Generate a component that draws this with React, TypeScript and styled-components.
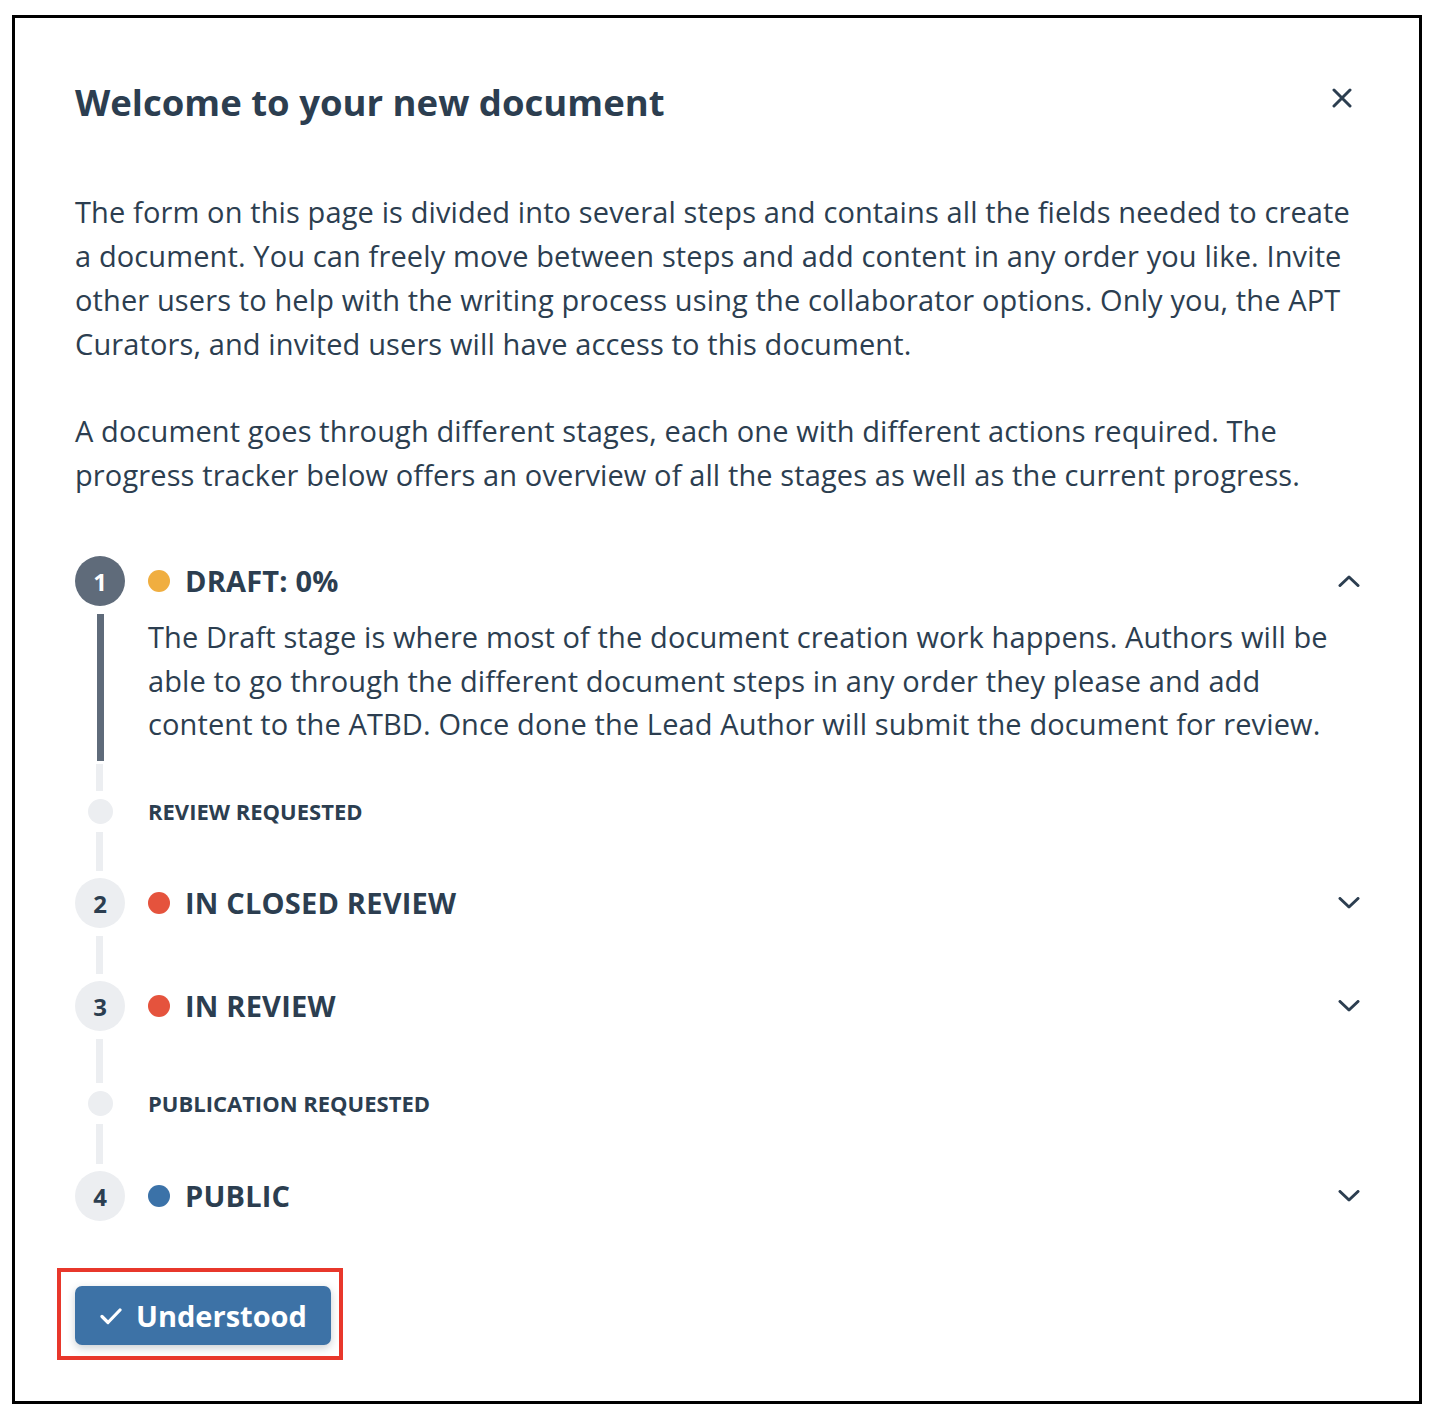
import React from "react";
import styled, { createGlobalStyle } from "styled-components";

const GlobalStyle = createGlobalStyle`
  * { box-sizing: border-box; }
  html, body { margin: 0; padding: 0; background: #ffffff; }
  body { font-family: "Open Sans", "Noto Sans", sans-serif; color: #2c3e50; }
`;

const Frame = styled.div`
  margin: 15px 0 0 12px;
  width: 1410px;
  height: 1389px;
  border: 3px solid #000;
  background: #fff;
  padding: 63px 59px 0 60px;
  display: flex;
  flex-direction: column;
`;

const Header = styled.header`
  display: flex;
  align-items: center;
  justify-content: space-between;
  height: 42px;
`;

const Title = styled.h1`
  margin: 0;
  font-size: 36.5px;
  line-height: 42px;
  font-weight: 700;
  color: #2c3e50;
`;

const CloseButton = styled.button`
  align-self: flex-start;
  border: 0;
  background: none;
  padding: 0;
  margin: 7px 8px 0 0;
  width: 20px;
  height: 20px;
  display: flex;
  color: #2c3e50;
`;

const Intro = styled.p<{ $top: number }>`
  margin: ${(p) => p.$top}px 0 0;
  font-size: 29px;
  letter-spacing: 0.12px;
  line-height: 44px;
  font-weight: 400;
  color: #2c3e50;
`;

const Timeline = styled.div`
  margin-top: 59px;
  display: flex;
  flex-direction: column;
`;

const StageHead = styled.div`
  display: grid;
  grid-template-columns: 50px 1fr 22px;
  column-gap: 23px;
  align-items: center;
`;

const Marker = styled.div<{ $active?: boolean }>`
  width: 50px;
  height: 50px;
  border-radius: 50%;
  background: ${(p) => (p.$active ? "#5f6b7a" : "#eceef1")};
  color: ${(p) => (p.$active ? "#ffffff" : "#2c3e50")};
  display: flex;
  align-items: center;
  justify-content: center;
  font-size: 24px;
  font-weight: 700;
`;

const StageTitle = styled.h2`
  margin: 0;
  display: flex;
  align-items: center;
  gap: 15px;
  font-size: 29px;
  letter-spacing: 0.2px;
  line-height: 36px;
  font-weight: 700;
  color: #2c3e50;
`;

const StatusDot = styled.span<{ $color: string }>`
  width: 22px;
  height: 22px;
  border-radius: 50%;
  background: ${(p) => p.$color};
  flex: none;
`;

const Chevron = styled.svg`
  width: 22px;
  height: 12px;
  color: #2c3e50;
`;

const StageBody = styled.div`
  display: grid;
  grid-template-columns: 50px 1fr;
  column-gap: 23px;
  height: 155px;
`;

const Track = styled.div`
  justify-self: center;
  width: 7px;
  margin-top: 8px;
  background: #5f6b7a;
`;

const Description = styled.p`
  margin: 9px 0 0;
  font-size: 29px;
  letter-spacing: 0.12px;
  line-height: 43.5px;
  color: #2c3e50;
`;

const Connector = styled.div<{ $h: number; $top?: number }>`
  width: 7px;
  height: ${(p) => p.$h}px;
  margin: ${(p) => p.$top ?? 8}px 0 7px 21px;
  background: #eceef1;
`;

const SubStep = styled.div`
  display: grid;
  grid-template-columns: 50px 1fr;
  column-gap: 23px;
  align-items: center;
`;

const SubDot = styled.div`
  justify-self: center;
  width: 25px;
  height: 25px;
  border-radius: 50%;
  background: #eceef1;
`;

const SubLabel = styled.span`
  font-size: 22px;
  line-height: 26px;
  font-weight: 700;
  color: #2c3e50;
`;

const Footer = styled.div`
  margin-top: 65px;
  display: flex;
`;

const Highlight = styled.div`
  position: relative;
  &::after {
    content: "";
    position: absolute;
    inset: -18px -12px -15px -18px;
    border: 4px solid #e8372b;
    pointer-events: none;
  }
`;

const PrimaryButton = styled.button`
  display: flex;
  align-items: center;
  gap: 14px;
  height: 59px;
  width: 256px;
  padding: 0 0 0 25px;
  border: 0;
  border-radius: 7px;
  background: #3d72a6;
  color: #ffffff;
  font-family: "Open Sans", "Noto Sans", sans-serif;
  font-size: 29px;
  font-weight: 700;
  box-shadow: 0 3px 8px rgba(44, 62, 80, 0.25);
`;

const ChevronIcon = ({ up }: { up?: boolean }) => (
  <Chevron viewBox="0 0 22 12" fill="none">
    <path
      d={up ? "M2 10.5 L11 2 L20 10.5" : "M2 1.5 L11 10 L20 1.5"}
      stroke="currentColor"
      strokeWidth="3"
      strokeLinecap="round"
      strokeLinejoin="round"
    />
  </Chevron>
);

type Stage = { n: number; label: string; color: string };

const StageHeader = ({ n, label, color, active, up }: Stage & { active?: boolean; up?: boolean }) => (
  <StageHead>
    <Marker $active={active}>{n}</Marker>
    <StageTitle>
      <StatusDot $color={color} />
      {label}
    </StageTitle>
    <ChevronIcon up={up} />
  </StageHead>
);

export default function App() {
  return (
    <>
      <GlobalStyle />
      <Frame>
        <Header>
          <Title>Welcome to your new document</Title>
          <CloseButton aria-label="Close">
            <svg width="20" height="20" viewBox="0 0 20 20" fill="none">
              <path d="M2 2 L18 18 M18 2 L2 18" stroke="currentColor" strokeWidth="3" strokeLinecap="round" />
            </svg>
          </CloseButton>
        </Header>
        <Intro $top={67}>
          The form on this page is divided into several steps and contains all the fields needed to create a
          document. You can freely move between steps and add content in any order you like. Invite other users
          to help with the writing process using the collaborator options. Only you, the APT Curators, and invited
          users will have access to this document.
        </Intro>
        <Intro $top={43}>
          A document goes through different stages, each one with different actions required. The progress tracker
          below offers an overview of all the stages as well as the current progress.
        </Intro>
        <Timeline>
          <StageHeader n={1} label="DRAFT: 0%" color="#f0ae40" active up />
          <StageBody>
            <Track />
            <Description>
              The Draft stage is where most of the document creation work happens. Authors will be able to go
              through the different document steps in any order they please and add content to the ATBD. Once done
              the Lead Author will submit the document for review.
            </Description>
          </StageBody>
          <Connector $top={3} $h={27} />
          <SubStep>
            <SubDot />
            <SubLabel>REVIEW REQUESTED</SubLabel>
          </SubStep>
          <Connector $h={39} />
          <StageHeader n={2} label="IN CLOSED REVIEW" color="#e5533d" />
          <Connector $h={38} />
          <StageHeader n={3} label="IN REVIEW" color="#e5533d" />
          <Connector $h={44} />
          <SubStep>
            <SubDot />
            <SubLabel>PUBLICATION REQUESTED</SubLabel>
          </SubStep>
          <Connector $h={40} />
          <StageHeader n={4} label="PUBLIC" color="#3b72a8" />
        </Timeline>
        <Footer>
          <Highlight>
            <PrimaryButton>
              <svg width="22" height="18" viewBox="0 0 22 18" fill="none">
                <path d="M2 9.5 L8 15.5 L20 3" stroke="currentColor" strokeWidth="3.2" strokeLinecap="round" strokeLinejoin="round" />
              </svg>
              Understood
            </PrimaryButton>
          </Highlight>
        </Footer>
      </Frame>
    </>
  );
}
